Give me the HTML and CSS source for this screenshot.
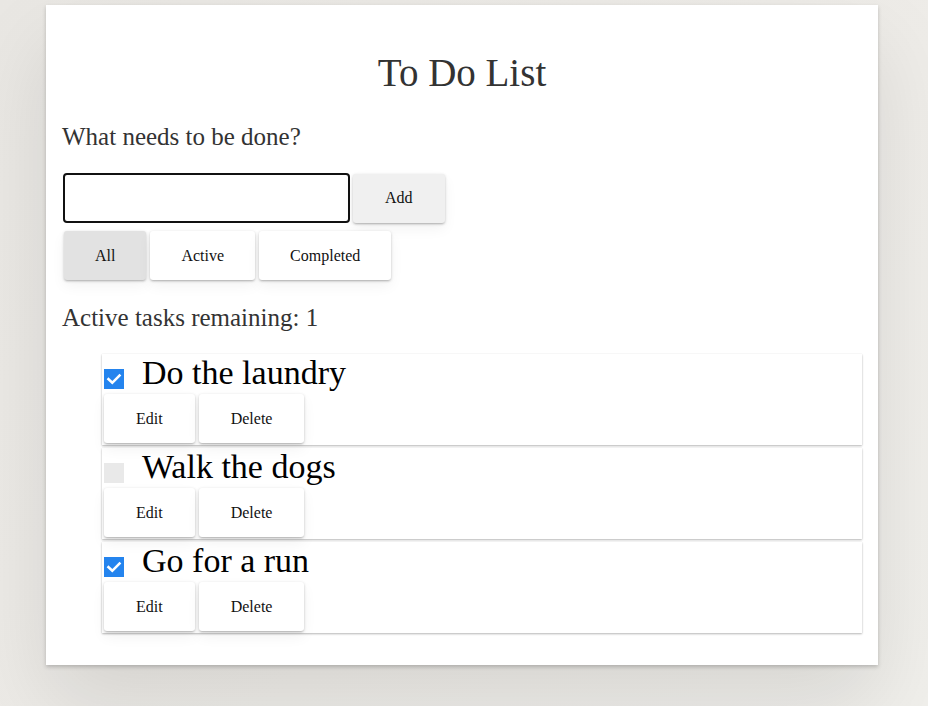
FILE: index.html
```html
<!DOCTYPE html>
<html lang="en">
<head>
<meta charset="utf-8">
<title>To Do List</title>
<link rel="stylesheet" href="styles.css">
</head>
<body>
<div class="todoapp">
  <h1 class="title">To Do List</h1>
  <form class="new-form">
    <h2 class="label-wrap"><label for="new-todo" class="prompt">What needs to be done?</label></h2>
    <div class="add-row">
      <input id="new-todo" class="text-input" type="text" autocomplete="off">
      <button type="button" class="btn btn-add">Add</button>
    </div>
  </form>
  <div class="filters">
    <button type="button" class="btn btn-pressed">All</button>
    <button type="button" class="btn">Active</button>
    <button type="button" class="btn">Completed</button>
  </div>
  <h2 class="remaining">Active tasks remaining: 1</h2>
  <ul class="todo-list">
    <li class="todo">
      <div class="todo-row">
        <span class="check checked"><svg viewBox="0 0 20 20" width="20" height="20"><path d="M4.5 10.2 L8.3 13.8 L15.5 6.6" fill="none" stroke="#fff" stroke-width="2.6" stroke-linecap="square"/></svg></span>
        <span class="todo-label">Do the laundry</span>
      </div>
      <div class="todo-btns">
        <button type="button" class="btn">Edit</button>
        <button type="button" class="btn">Delete</button>
      </div>
    </li>
    <li class="todo">
      <div class="todo-row">
        <span class="check"></span>
        <span class="todo-label">Walk the dogs</span>
      </div>
      <div class="todo-btns">
        <button type="button" class="btn">Edit</button>
        <button type="button" class="btn">Delete</button>
      </div>
    </li>
    <li class="todo">
      <div class="todo-row">
        <span class="check checked"><svg viewBox="0 0 20 20" width="20" height="20"><path d="M4.5 10.2 L8.3 13.8 L15.5 6.6" fill="none" stroke="#fff" stroke-width="2.6" stroke-linecap="square"/></svg></span>
        <span class="todo-label">Go for a run</span>
      </div>
      <div class="todo-btns">
        <button type="button" class="btn">Edit</button>
        <button type="button" class="btn">Delete</button>
      </div>
    </li>
  </ul>
</div>
</body>
</html>
```
FILE: styles.css
```css
* { box-sizing: border-box; }

html, body {
  margin: 0;
  padding: 0;
}

body {
  min-height: 706px;
  background: linear-gradient(135deg, #e9e7e3 0%, #eeece8 60%, #f0efeb 100%);
  font-family: "Liberation Serif", "Times New Roman", serif;
  color: #333;
  overflow: hidden;
}

.todoapp {
  width: 832px;
  margin: 5px 0 0 46px;
  padding: 16px 16px 32px;
  background: #fff;
  box-shadow: 0 2px 4px rgba(0, 0, 0, 0.2), 0 40px 80px rgba(0, 0, 0, 0.1);
}

.title {
  margin: 29px 0 0;
  font-size: 39px;
  font-weight: normal;
  line-height: normal;
  text-align: center;
  color: #333;
}

.new-form {
  margin: 0;
}

.label-wrap {
  margin: 28px 0 0;
  font-size: 25px;
  font-weight: normal;
  line-height: normal;
}

.prompt {
  color: #333;
}

.add-row {
  display: flex;
  align-items: center;
  gap: 3px;
  margin-top: 22px;
  padding-left: 1px;
}

.text-input {
  width: 287px;
  height: 50px;
  margin: 0;
  border: 2px solid #111;
  border-radius: 4px;
  background: #fff;
  font-family: inherit;
  font-size: 20px;
  padding: 0 8px;
}

.btn {
  height: 49px;
  margin: 0;
  padding: 0 32px;
  border: 0;
  border-radius: 3px;
  background: #fff;
  color: #111;
  font-family: "Liberation Serif", "Times New Roman", serif;
  font-size: 16px;
  line-height: 1;
  cursor: pointer;
  box-shadow: 0 1px 3px rgba(0, 0, 0, 0.22), 0 2px 2px -1px rgba(0, 0, 0, 0.12), 0 6px 14px rgba(0, 0, 0, 0.05);
}

.btn-add {
  background: #f0f0f0;
}

.btn-pressed {
  background: #e2e2e2;
}

.filters {
  display: flex;
  gap: 4px;
  margin-top: 8px;
  padding-left: 2px;
}

.filters .btn {
  padding: 0 31px;
}

.remaining {
  margin: 24px 0 0;
  font-size: 25px;
  font-weight: normal;
  line-height: normal;
  color: #333;
}

.todo-list {
  margin: 22px 0 0;
  padding: 0 0 0 40px;
  list-style: none;
}

.todo {
  margin-bottom: 3px;
  padding-bottom: 2px;
  background: #fff;
  box-shadow: 0 1px 2px rgba(0, 0, 0, 0.28), 0 0 1px rgba(0, 0, 0, 0.08);
}

.todo:last-child {
  margin-bottom: 0;
}

.todo-row {
  display: flex;
  align-items: flex-start;
  height: 40px;
}

.check {
  flex: none;
  width: 20px;
  height: 20px;
  margin: 15px 0 0 2px;
  background: #e9e9e9;
}

.check svg {
  display: block;
}

.check.checked {
  background: #2484ee;
}

.todo-label {
  margin-left: 18px;
  font-size: 34px;
  line-height: 38px;
  color: #000;
}

.todo-btns {
  display: flex;
  gap: 4px;
  padding-left: 2px;
}
```
